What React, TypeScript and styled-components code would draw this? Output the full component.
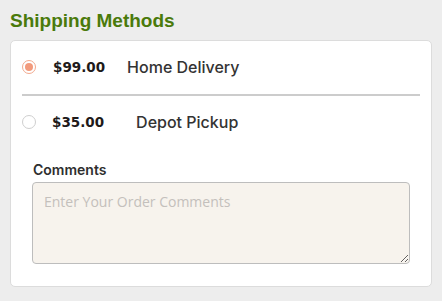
import React from "react";
import styled, { createGlobalStyle } from "styled-components";

const Global = createGlobalStyle`
  html, body { margin: 0; padding: 0; background: #ededed; }
  body { font-family: Inter, "Liberation Sans", sans-serif; }
  * { box-sizing: border-box; }
`;

const Page = styled.div`
  padding: 9px 10px 14px 10px;
  width: 442px;
`;

const Title = styled.h2`
  margin: 0 0 7px 0;
  font-family: "Liberation Sans", Arial, sans-serif;
  font-weight: 700;
  font-size: 19px;
  line-height: 24px;
  color: #4a7a0b;
`;

const Card = styled.div`
  background: #fff;
  border: 1px solid #dcdcdc;
  border-radius: 5px;
  padding: 11px 11px 23px 11px;
  height: 247px;
`;

const Row = styled.label`
  display: flex;
  align-items: center;
  height: 30px;
`;

const Radio = styled.span<{ $checked?: boolean }>`
  width: 14px;
  height: 14px;
  border-radius: 50%;
  border: 1px solid ${(p) => (p.$checked ? "#f2a98e" : "#cfcfcf")};
  display: flex;
  align-items: center;
  justify-content: center;
  flex: none;
  &::after {
    content: "";
    width: 8px;
    height: 8px;
    border-radius: 50%;
    background: ${(p) => (p.$checked ? "#f29a7c" : "transparent")};
  }
`;

const Price = styled.span<{ $gap: number }>`
  margin-left: ${(p) => p.$gap}px;
  font-family: "DejaVu Sans", Verdana, sans-serif;
  font-weight: 700;
  font-size: 13.5px;
  color: #1e1a1a;
`;

const Name = styled.span<{ $gap: number }>`
  margin-left: ${(p) => p.$gap}px;
  font-family: Inter, sans-serif;
  font-weight: 500;
  font-size: 16px;
  color: #333;
`;

const Divider = styled.hr`
  border: none;
  height: 2px;
  background: #cccccc;
  margin: 12px 0 11px 0;
`;

const Comments = styled.div`
  padding: 0 10px;
  margin-top: 24px;
  display: flex;
  flex-direction: column;
`;

const CommentLabel = styled.div`
  font-family: Inter, sans-serif;
  font-weight: 600;
  font-size: 14px;
  color: #2e2e2e;
  margin-bottom: 4px;
  margin-left: 1px;
`;

const TextArea = styled.textarea`
  width: 378px;
  height: 82px;
  background: #f7f3ed;
  border: 1px solid #bdbdbd;
  border-radius: 4px;
  padding: 9px 11px;
  font-family: "Open Sans", sans-serif;
  font-size: 14px;
  color: #333;
  outline: none;
  &::placeholder { color: #c4c0bc; }
`;

export default function App() {
  return (
    <>
      <Global />
      <Page>
        <Title>Shipping Methods</Title>
        <Card>
          <Row>
            <Radio $checked />
            <Price $gap={17}>$99.00</Price>
            <Name $gap={22}>Home Delivery</Name>
          </Row>
          <Divider />
          <Row>
            <Radio />
            <Price $gap={16}>$35.00</Price>
            <Name $gap={32}>Depot Pickup</Name>
          </Row>
          <Comments>
            <CommentLabel>Comments</CommentLabel>
            <TextArea placeholder="Enter Your Order Comments" />
          </Comments>
        </Card>
      </Page>
    </>
  );
}
